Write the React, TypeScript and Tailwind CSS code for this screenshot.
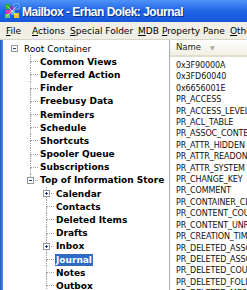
import React from "react";

type Node = {
  label: string;
  level: number;
  box?: "plus" | "minus";
  last?: boolean;
  selected?: boolean;
  plain?: boolean;
};

const tree: Node[] = [
  { label: "Root Container", level: 0, box: "minus", last: true, plain: true },
  { label: "Common Views", level: 1 },
  { label: "Deferred Action", level: 1 },
  { label: "Finder", level: 1 },
  { label: "Freebusy Data", level: 1 },
  { label: "Reminders", level: 1 },
  { label: "Schedule", level: 1 },
  { label: "Shortcuts", level: 1 },
  { label: "Spooler Queue", level: 1 },
  { label: "Subscriptions", level: 1 },
  { label: "Top of Information Store", level: 1, box: "minus", last: true },
  { label: "Calendar", level: 2, box: "plus" },
  { label: "Contacts", level: 2 },
  { label: "Deleted Items", level: 2 },
  { label: "Drafts", level: 2 },
  { label: "Inbox", level: 2, box: "plus" },
  { label: "Journal", level: 2, selected: true },
  { label: "Notes", level: 2 },
  { label: "Outbox", level: 2 },
  { label: "Sent Items", level: 2 },
];

const props = [
  "0x3F90000A",
  "0x3FD60040",
  "0x6656001E",
  "PR_ACCESS",
  "PR_ACCESS_LEVEL",
  "PR_ACL_TABLE",
  "PR_ASSOC_CONTENT_COUNT",
  "PR_ATTR_HIDDEN",
  "PR_ATTR_READONLY",
  "PR_ATTR_SYSTEM",
  "PR_CHANGE_KEY",
  "PR_COMMENT",
  "PR_CONTAINER_CLASS",
  "PR_CONTENT_COUNT",
  "PR_CONTENT_UNREAD",
  "PR_CREATION_TIME",
  "PR_DELETED_ASSOC_MESSAGE_SIZE",
  "PR_DELETED_ASSOC_MSG_COUNT",
  "PR_DELETED_COUNT_TOTAL",
  "PR_DELETED_FOLDER_COUNT",
  "PR_DELETED_MESSAGE_SIZE",
];

function ExpandBox({ kind }: { kind: "plus" | "minus" }) {
  return (
    <div className="absolute left-[5px] top-[3px] w-[7px] h-[7px] bg-white border border-[#919b9c] flex items-center justify-center z-10">
      <div className="relative w-[3px] h-[1px] bg-[#1f3f7f]">
        {kind === "plus" && <div className="absolute left-[1px] -top-[1px] w-[1px] h-[3px] bg-[#1f3f7f]" />}
      </div>
    </div>
  );
}

function Gutter({ node, parentLastAt }: { node: Node; parentLastAt: boolean[] }) {
  const cells = [];
  for (let i = 0; i <= node.level; i++) {
    const own = i === node.level;
    cells.push(
      <div key={i} className="relative w-[16px] h-full shrink-0">
        {!own && !parentLastAt[i] && (
          <div className="absolute left-[8px] top-0 h-full border-l border-dotted border-[#a0a0a0]" />
        )}
        {own && node.level > 0 && (
          <>
            <div className="absolute left-[8px] top-0 h-[7px] border-l border-dotted border-[#a0a0a0]" />
            {!node.last && (
              <div className="absolute left-[8px] top-[7px] bottom-0 border-l border-dotted border-[#a0a0a0]" />
            )}
            <div className="absolute left-[8px] top-[6px] w-[8px] border-t border-dotted border-[#a0a0a0]" />
          </>
        )}
        {own && node.box && <ExpandBox kind={node.box} />}
      </div>
    );
  }
  return <>{cells}</>;
}

function TreePane() {
  // last-sibling flags per level, for drawing ancestor lines
  const lastFlags: boolean[] = [];
  return (
    <div className="w-[166px] shrink-0 bg-white pt-[2px] pl-[3px] overflow-hidden">
      {tree.map((n) => {
        const ancestors = lastFlags.slice(0, n.level);
        lastFlags[n.level] = !!n.last;
        return (
          <div key={n.label} className="flex h-[13.2px] items-stretch">
            <Gutter node={n} parentLastAt={[true, ...ancestors.slice(1)]} />
            <div className="flex items-center ml-[1px]">
              <span
                className={
                  "whitespace-nowrap text-[9px] leading-[12px] px-[1px] " +
                  (n.plain ? "font-normal " : "font-bold ") +
                  (n.selected ? "bg-[#316ac5] text-white" : "text-black")
                }
              >
                {n.label}
              </span>
            </div>
          </div>
        );
      })}
    </div>
  );
}

function ListPane() {
  return (
    <div className="flex-1 border-l border-[#a5acb5] bg-white overflow-hidden">
      <div className="h-[17px] flex items-center pl-[6px] bg-linear-to-b from-[#ffffff] to-[#f1efe2] border-b-2 border-[#e2decd] text-[8.5px] text-[#222]">
        <span>Name</span>
        <span className="ml-[9px] text-[6px] text-[#aca899]">▼</span>
      </div>
      <div className="pt-[3px] pl-[6px]">
        {props.map((p, i) => (
          <div key={i} className="h-[11.42px] leading-[11.42px] text-[8px] tracking-[-0.1px] text-[#111] whitespace-nowrap">
            {p}
          </div>
        ))}
      </div>
    </div>
  );
}

function AppIcon() {
  return (
    <svg width="16" height="16" viewBox="0 0 16 16" className="shrink-0">
      <rect x="1" y="1" width="5" height="5" fill="#2fae3f" />
      <rect x="6" y="3" width="5" height="4" fill="#7b3fc6" />
      <rect x="10" y="1" width="5" height="5" fill="#1e6ee8" stroke="#9fd0ff" strokeWidth="0.6" />
      <rect x="2" y="7" width="5" height="4" fill="#e23aa0" />
      <rect x="7" y="7" width="4" height="5" fill="#3fc2e8" />
      <rect x="10" y="10" width="5" height="5" fill="#f2c12e" />
      <rect x="1" y="11" width="5" height="4" fill="#5ad15a" />
      <path d="M3 3 L13 13 M13 3 L3 13" stroke="#ffffff" strokeWidth="0.8" opacity="0.7" />
    </svg>
  );
}

export default function App() {
  return (
    <div className="w-[247px] h-[290px] overflow-hidden bg-white font-['DejaVu_Sans',sans-serif] flex flex-col">
      <div className="h-[22px] shrink-0 flex items-center pl-[4px] gap-[2px] bg-linear-to-b from-[#4f93f7] via-[#1e64e6] to-[#1858db]">
        <AppIcon />
        <span className="text-white font-bold text-[12px] tracking-[-0.5px] whitespace-nowrap font-['Liberation_Sans',sans-serif] pt-[1px] [text-shadow:1px_1px_0_#0a2f8a]">
          Mailbox - Erhan Dolek: Journal
        </span>
      </div>
      <div className="h-[18px] shrink-0 flex items-center pl-[6px] pt-[3px] bg-[#f0efe6] border-b border-[#d8d5c8] text-[9px] text-black whitespace-nowrap">
        <span className="w-[26px] shrink-0"><u>F</u>ile</span>
        <span className="w-[38px] shrink-0"><u>A</u>ctions</span>
        <span className="w-[68px] shrink-0"><u>S</u>pecial Folder</span>
        <span className="w-[24px] shrink-0"><u>M</u>DB</span>
        <span className="w-[68px] shrink-0"><u>P</u>roperty Pane</span>
        <span className="shrink-0"><u>O</u>ther</span>
      </div>
      <div className="flex flex-1 min-h-0">
        <div className="w-[3px] shrink-0 bg-linear-to-r from-[#1f52c9] to-[#5b8ef0]" />
        <TreePane />
        <ListPane />
      </div>
    </div>
  );
}
